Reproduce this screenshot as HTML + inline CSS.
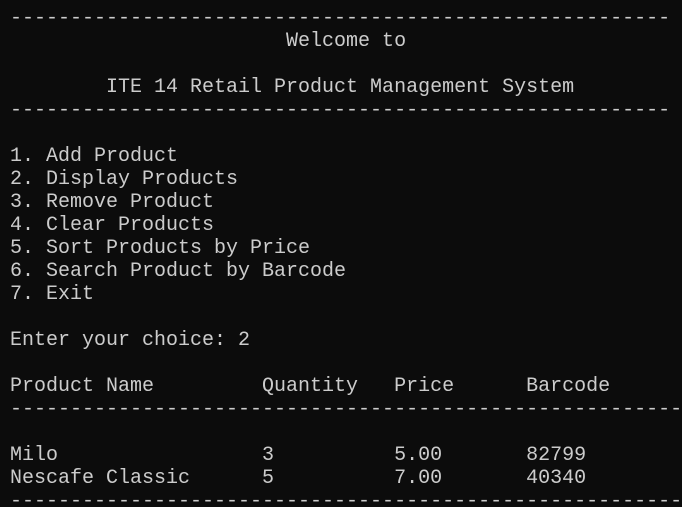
<!DOCTYPE html>
<html><head><meta charset="utf-8"><style>
html,body{margin:0;padding:0;background:#0c0c0c;width:682px;height:507px;overflow:hidden}
pre{margin:0;padding:7px 0 0 10px;font-family:"Liberation Mono",monospace;font-size:20px;line-height:23px;color:#cccccc;white-space:pre;overflow:hidden}
</style></head><body><pre>-------------------------------------------------------
                       Welcome to

        ITE 14 Retail Product Management System
-------------------------------------------------------

1. Add Product
2. Display Products
3. Remove Product
4. Clear Products
5. Sort Products by Price
6. Search Product by Barcode
7. Exit

Enter your choice: 2

Product Name         Quantity   Price      Barcode
------------------------------------------------------------

Milo                 3          5.00       82799
Nescafe Classic      5          7.00       40340
------------------------------------------------------------
</pre></body></html>
